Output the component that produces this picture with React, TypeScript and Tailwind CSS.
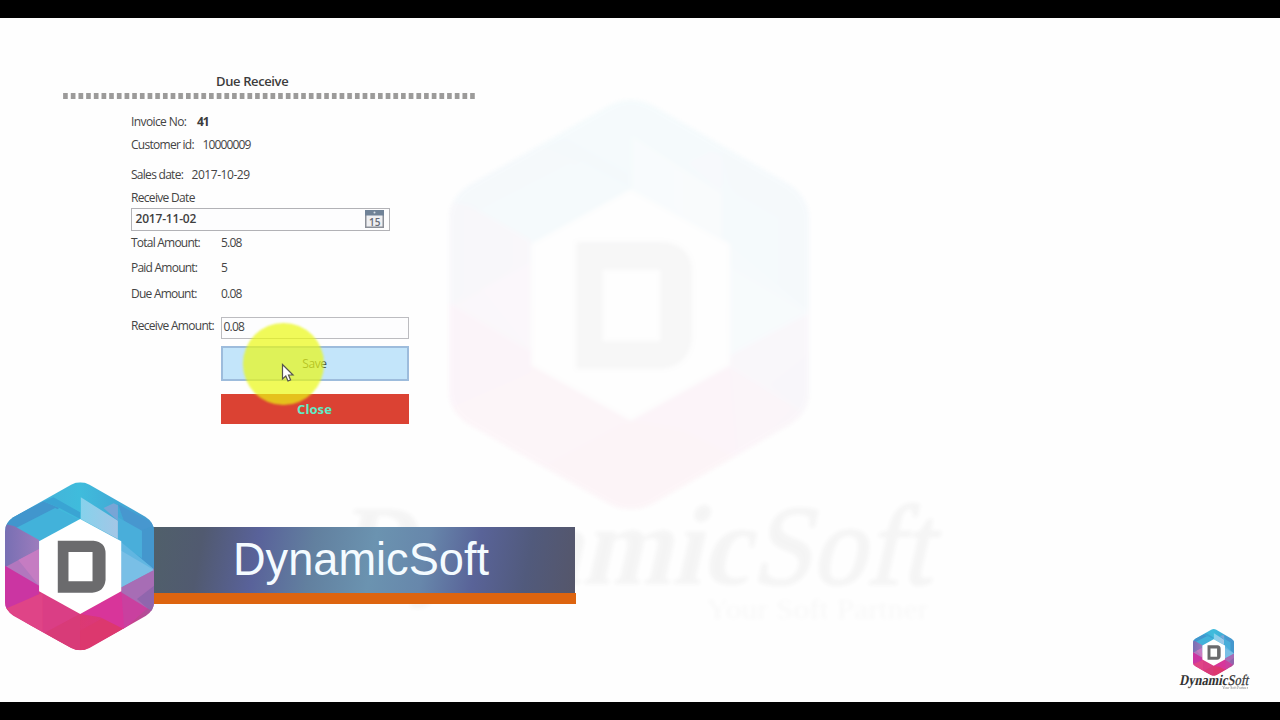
import React from "react";

function Emblem({ id, className }: { id: string; className: string }) {
  return (
    <svg className={className} viewBox="15 34 446 507" preserveAspectRatio="none">
      <defs>
        <clipPath id={id}>
          <path d="M213 42 Q240 28 268 42 L435 138 Q461 154 461 183 L461 395 Q461 420 437 435 L268 532 Q240 546 213 532 L40 435 Q15 420 15 392 L15 183 Q15 156 40 140 Z" />
        </clipPath>
        <linearGradient id={`${id}-top`} x1="0" x2="1" y1="0" y2="0">
          <stop offset="0" stopColor="#4aa9d6" />
          <stop offset="0.5" stopColor="#3fbcdc" />
          <stop offset="1" stopColor="#4499cf" />
        </linearGradient>
        <linearGradient id={`${id}-low`} x1="0" x2="1" y1="0" y2="0">
          <stop offset="0" stopColor="#dd4088" />
          <stop offset="0.5" stopColor="#dc3972" />
          <stop offset="0.75" stopColor="#d9367f" />
          <stop offset="1" stopColor="#a9529f" />
        </linearGradient>
        <linearGradient id={`${id}-left`} x1="0" x2="1" y1="0" y2="0">
          <stop offset="0" stopColor="#776fb3" />
          <stop offset="1" stopColor="#9c7cbd" />
        </linearGradient>
        <linearGradient id={`${id}-pale`} x1="0" x2="1" y1="0" y2="0">
          <stop offset="0" stopColor="#86d2ec" />
          <stop offset="1" stopColor="#a3c6e6" />
        </linearGradient>
      </defs>
      <g clipPath={`url(#${id})`}>
        <rect x="15" y="34" width="446" height="270" fill={`url(#${id}-top)`} />
        <rect x="15" y="290" width="446" height="251" fill={`url(#${id}-low)`} />
        <path d="M15 150 L130 92 L178 112 L50 178 L15 170Z" fill="#4196cd" />
        <path d="M130 92 L178 112 L240 145 L240 125 L160 80Z" fill="#3aa4d3" />
        <path d="M48 172 L165 112 L236 146 L117 212Z" fill="#42b2da" />
        <path d="M15 160 L42 166 L117 208 L117 245 L15 300Z" fill={`url(#${id}-left)`} />
        <path d="M15 290 L117 235 L117 355Z" fill="#b277be" />
        <path d="M55 268 L117 235 L117 345Z" fill="#c57cc2" />
        <path d="M15 285 L117 345 L117 370 L15 420Z" fill="#cb35a2" />
        <path d="M15 415 L128 366 L128 490Z" fill="#df4487" />
        <path d="M128 366 L240 430 L128 490Z" fill="#da3e85" />
        <path d="M128 490 L240 430 L240 545Z" fill="#d83b78" />
        <path d="M240 480 L320 435 L375 472 L240 545Z" fill="#dc386e" />
        <path d="M240 430 L363 362 L390 400 L370 475 L300 440Z" fill="#d8359a" />
        <path d="M363 362 L445 410 L372 475Z" fill="#c9409f" />
        <path d="M461 298 L363 350 L363 365 L440 412 L461 400Z" fill="#a76db5" />
        <path d="M461 345 L410 385 L440 412 L461 425Z" fill="#9066ad" />
        <path d="M242 80 L353 150 L353 205 L242 145Z" fill={`url(#${id}-pale)`} />
        <path d="M310 112 L340 98 L353 104 L353 150Z" fill="#78a5d6" />
        <path d="M353 100 L461 160 L461 235 L385 190Z" fill="#4797cf" />
        <path d="M353 140 L425 180 L425 262 L363 222 L353 205Z" fill="#49aeda" />
        <path d="M363 215 L461 295 L363 350Z" fill="#61b6e1" />
        <path d="M363 240 L461 298 L363 350Z" fill="#79bfe6" />
        <path d="M425 178 L461 165 L461 295 L425 265Z" fill="#4497cd" />
      </g>
      <path d="M240 145 L363 212 L363 362 L240 430 L117 362 L117 212Z" fill="#fff" />
      <path
        fillRule="evenodd"
        fill="#6b6b6d"
        d="M173 210 H280 Q316 214 316 248 V328 Q312 364 276 366 H173Z M205 244 V332 H277 V244Z"
      />
    </svg>
  );
}

function Wordmark({ className }: { className: string }) {
  return (
    <svg className={className} viewBox="0 0 614 130" preserveAspectRatio="none">
      <g transform="translate(0 83) skewX(-13)" fontFamily="'Liberation Serif', serif" fontSize="114" fill="#333">
        <text x="3" y="0" textLength="414" lengthAdjust="spacingAndGlyphs" fontWeight="700">
          Dynamic
        </text>
        <text x="419" y="0" textLength="180" lengthAdjust="spacingAndGlyphs" stroke="#333" strokeWidth="2">
          Soft
        </text>
      </g>
      <text
        x="374"
        y="118"
        fontFamily="'Liberation Serif', serif"
        fontSize="29"
        textLength="222"
        lengthAdjust="spacingAndGlyphs"
        fill="#333"
        opacity="0.65"
      >
        Your Soft Partner
      </text>
    </svg>
  );
}

function CalendarIcon() {
  return (
    <svg className="h-[18px] w-[19px]" viewBox="0 0 19 18">
      <rect x="0.75" y="0.75" width="17.5" height="16.5" fill="#eeeff2" stroke="#8b8f98" strokeWidth="1.5" />
      <rect x="0" y="0" width="19" height="5.5" fill="#6f8297" />
      <circle cx="9.5" cy="2.5" r="1" fill="#d5dde6" />
      <text x="4" y="15.5" fontFamily="'Open Sans', sans-serif" fontSize="10" fontWeight="600" textLength="11.5" fill="#666b76">
        15
      </text>
    </svg>
  );
}

function Amount({ label, value, tracking }: { label: string; value: string; tracking: string }) {
  return (
    <div className="flex h-[25.5px] items-center">
      <span className={`w-[90px] ${tracking}`}>{label}</span>
      <span className="tracking-[-0.8px]">{value}</span>
    </div>
  );
}

function DueForm() {
  return (
    <div className="ml-[62px] w-[415px] pt-[53px] font-['Open_Sans','Noto_Sans',sans-serif] text-[12px] whitespace-nowrap text-[#444]">
      <h1 className="ml-[154px] h-5 text-[13px] leading-5 font-semibold tracking-[-0.38px] text-[#3c3c3c]">Due Receive</h1>
      <div className="mt-[2px] h-[5.5px] bg-[repeating-linear-gradient(90deg,#fff_0px,#fff_0.6px,#9c9b9a_1.6px,#9c9b9a_5.2px,#fff_6.4px,#fff_7.68px)]" />
      <div className="ml-[69px]">
        <div className="mt-[13.5px] flex h-5 items-center">
          <span className="w-[66px] tracking-[-0.6px]">Invoice No:</span>
          <b className="tracking-[-1.2px] text-[#3c3c3c]">41</b>
        </div>
        <div className="mt-[3px] flex h-5 items-center">
          <span className="w-[71.5px] tracking-[-0.72px]">Customer id:</span>
          <span className="tracking-[-0.85px]">10000009</span>
        </div>
        <div className="mt-[10px] flex h-5 items-center">
          <span className="w-[60.5px] tracking-[-0.72px]">Sales date:</span>
          <span className="tracking-[-0.45px]">2017-10-29</span>
        </div>
        <div className="mt-[3px] h-5 leading-5 tracking-[-0.68px]">Receive Date</div>
        <div className="flex h-[23px] w-[259px] items-center justify-between border border-[#b2b2b6] bg-[#fdfdfe] pr-[5px] pb-px pl-[3.5px]">
          <span className="font-semibold tracking-[-0.2px] text-[#3f3f3f]">2017-11-02</span>
          <CalendarIcon />
        </div>
        <div className="-mt-px">
          <Amount label="Total Amount:" value="5.08" tracking="tracking-[-0.78px]" />
          <Amount label="Paid Amount:" value="5" tracking="tracking-[-0.77px]" />
          <Amount label="Due Amount:" value="0.08" tracking="tracking-[-0.76px]" />
        </div>
        <div className="mt-[10.5px] flex h-[22px]">
          <span className="w-[89.5px] leading-[18px] tracking-[-0.7px]">Receive Amount:</span>
          <div className="w-[188px] border border-[#bcbcc0] bg-[#fdfdfe] pl-[2px] leading-[17px] tracking-[-0.8px]">0.08</div>
        </div>
        <button className="mt-[7px] ml-[89.5px] flex h-[34.5px] w-[188px] items-center justify-center border-2 border-[#9dbcdc] bg-[#c3e5fa] pt-[2px] tracking-[-0.4px] text-[#3e4a55]">
          Save
        </button>
        <button className="mt-[13px] ml-[89.5px] flex h-[30px] w-[188px] items-center justify-center bg-[#db4233] pt-[2px] text-[13px] font-bold tracking-[0.1px] text-[#5fecc6]">
          Close
        </button>
      </div>
    </div>
  );
}

export default function App() {
  return (
    <div className="flex h-[720px] w-[1280px] flex-col overflow-hidden bg-black">
      <main className="relative mt-[18px] h-[684px] overflow-hidden bg-[#fefefe]">
        <DueForm />

        <div className="pointer-events-none absolute top-[81px] left-[332px] opacity-[0.045] blur-[2px]">
          <Emblem id="watermark" className="ml-[117px] h-[412px] w-[360px]" />
          <Wordmark className="-mt-[10px] h-[130px] w-[614px]" />
        </div>

        <div className="absolute top-[305px] left-[243px] h-[82px] w-[81px] rounded-full bg-[#eaf812]/70 blur-[1px]" />
        <svg className="absolute top-[345px] left-[281px] h-[20px] w-[14px]" viewBox="0 0 14 20">
          <path d="M1.5 1.5 V16 L4.8 13 L7 18 L9.6 17 L7.5 12 H12Z" fill="#fff" stroke="#55554d" strokeWidth="1.2" />
        </svg>

        <div className="absolute top-[509px] left-[152px] w-[424px]">
          <div className="flex h-[66px] w-[423px] items-center bg-[linear-gradient(100deg,#50606a_0%,#515a70_12%,#59629a_25%,#62809f_38%,#6b93b0_52%,#6787ab_64%,#596398_76%,#515a7c_88%,#55566a_100%)] pl-[80px]">
            <svg className="h-[60px] w-[262px]" viewBox="0 0 262 60">
              <text
                x="1"
                y="44.5"
                fontFamily="'Liberation Sans', sans-serif"
                fontSize="46"
                textLength="256"
                lengthAdjust="spacingAndGlyphs"
                fill="#f4fbff"
              >
                DynamicSoft
              </text>
            </svg>
          </div>
          <div className="h-[11px] bg-[#dd640f]" />
        </div>
        <Emblem id="banner" className="absolute top-[463.5px] left-[5px] h-[169px] w-[149px]" />

        <div className="absolute top-[611px] left-[1179px] w-[71px]">
          <Emblem id="corner" className="ml-[14px] h-[47px] w-[41px]" />
          <Wordmark className="-mt-[2px] h-[17px] w-[71px]" />
        </div>
      </main>
    </div>
  );
}
